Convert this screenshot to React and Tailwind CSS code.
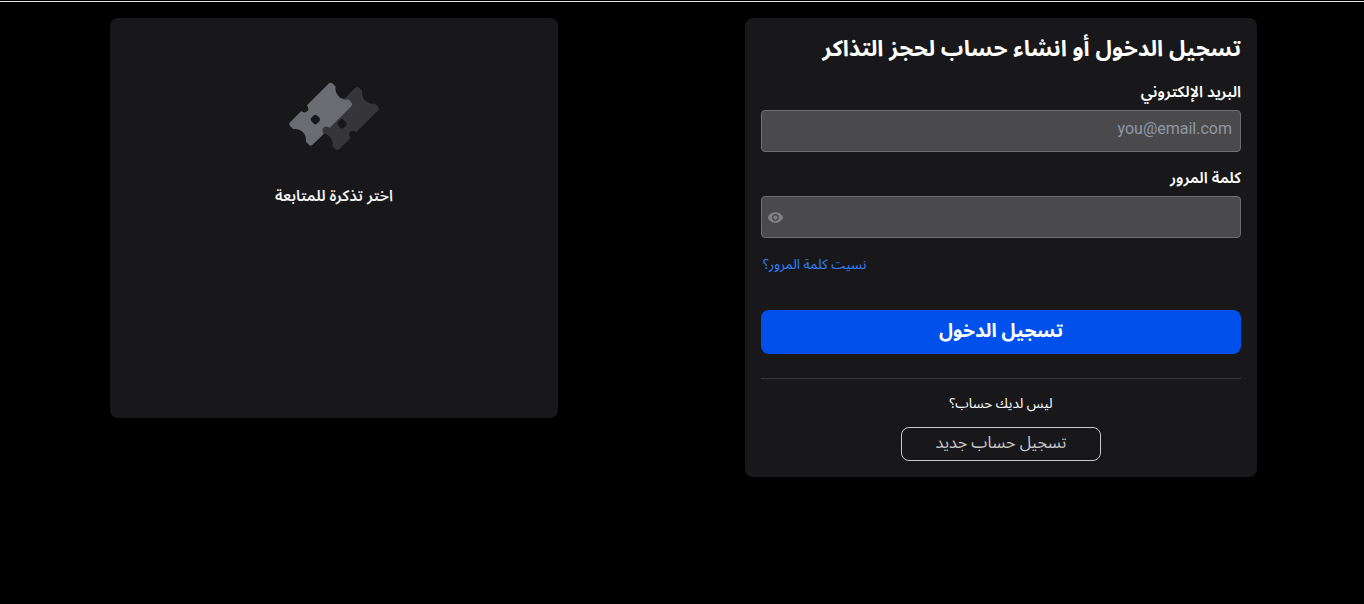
import React from "react";
import { MdVisibility } from "react-icons/md";

function TicketShape({ fill }) {
  return (
    <path
      fill={fill}
      fillRule="evenodd"
      d="M-27 -16 H-11.5 A4 4.5 0 0 0 -3.5 -16 H27 A3 3 0 0 1 30 -13 V-9 A11 11 0 0 0 30 9 V13 A3 3 0 0 1 27 16 H-3.5 A4 4.5 0 0 0 -11.5 16 H-27 A3 3 0 0 1 -30 13 V9 A11 11 0 0 0 -30 -9 V-13 A3 3 0 0 1 -27 -16 Z M-9.5 -4 H-5.5 A2.5 2.5 0 0 1 -3.5 -1.5 V1.5 A2.5 2.5 0 0 1 -5.5 4 H-9.5 A2.5 2.5 0 0 1 -11.5 1.5 V-1.5 A2.5 2.5 0 0 1 -9.5 -4 Z"
    />
  );
}

function Tickets() {
  return (
    <svg width="100" height="76" viewBox="0 0 100 76" className="block">
      <g transform="translate(63.3 40.5) rotate(-45)">
        <TicketShape fill="#36363a" />
      </g>
      <g transform="translate(36.7 36.2) rotate(-45)">
        <TicketShape fill="#6b6b72" />
      </g>
    </svg>
  );
}

export default function App() {
  return (
    <div dir="rtl" className="h-[604px] overflow-hidden bg-black text-white font-['Noto_Sans','Noto_Sans_Arabic','DejaVu_Sans',sans-serif]">
      <div className="h-[2px] bg-black border-b border-[#e5e5e5]" />
      <div className="flex items-start justify-between pt-4 pr-[107px] pl-[110px]">
        <div className="flex h-[459px] w-[512px] flex-col rounded-lg bg-[#18181b] px-4 pt-[14px]">
          <h1 className="text-right text-[22.3px] leading-8 font-bold">تسجيل الدخول أو انشاء حساب لحجز التذاكر</h1>
          <label className="mt-[18px] text-[15.4px] leading-5 font-semibold">البريد الإلكتروني</label>
          <div className="mt-2 flex h-[42px] items-center rounded border border-[#6e6e70] bg-[#4a4a4c] px-2 pb-1">
            <span dir="ltr" className="font-['Roboto',sans-serif] text-base text-[#8f97a6]">you@email.com</span>
          </div>
          <label className="mt-4 text-[15.4px] leading-5 font-semibold">كلمة المرور</label>
          <div className="mt-2 flex h-[42px] items-center justify-end rounded border border-[#6e6e70] bg-[#4a4a4c] px-[5px]">
            <MdVisibility className="h-[17px] w-[17px] text-[#808085]" />
          </div>
          <a className="mt-4 self-end pl-0.5 text-[13.6px] leading-5 text-[#3080fa]">نسيت كلمة المرور؟</a>
          <button className="mt-9 h-11 rounded-lg bg-[#0050ec] pb-1 text-[19px] font-bold text-white">تسجيل الدخول</button>
          <div className="mt-6 h-px bg-[#3a3a3c]" />
          <p className="mt-[14px] text-center text-[13.6px] leading-5">ليس لديك حساب؟</p>
          <button className="mt-[14px] h-[34px] w-[200px] self-center rounded-lg border border-[#c8c8c8] pb-1 text-[16.2px] leading-6 text-[#c8c8c8]">تسجيل حساب جديد</button>
        </div>
        <div className="flex h-[400px] w-[448px] flex-col items-center rounded-lg bg-[#18181b] pt-[60px]">
          <Tickets />
          <p className="mt-[30px] text-[15.4px] leading-6 font-semibold text-[#f0f0f0]">اختر تذكرة للمتابعة</p>
        </div>
      </div>
    </div>
  );
}
